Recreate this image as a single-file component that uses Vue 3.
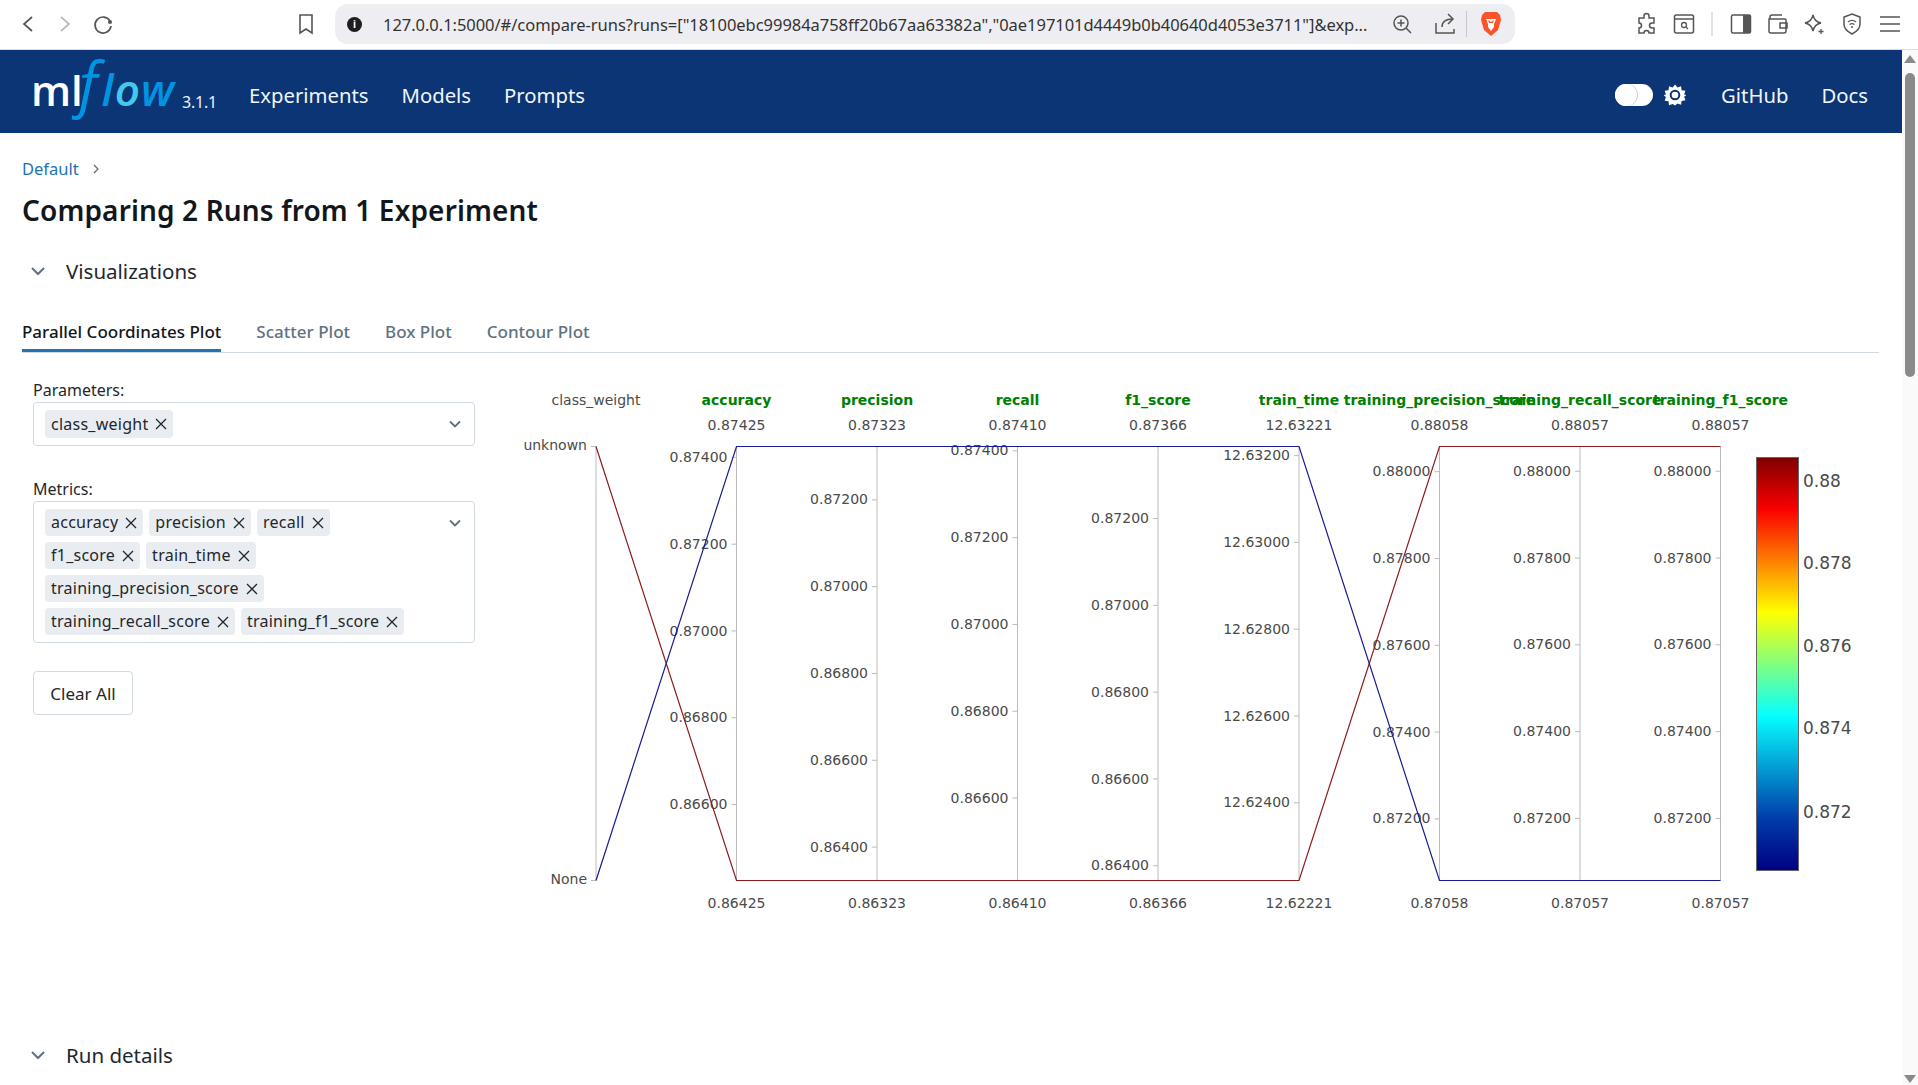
<script setup>
const A = [
  { x: 596, name: 'class_weight', cat: true },
  { x: 736.5, name: 'accuracy', top: 0.87425, bot: '0.86425', ticks: [0.874, 0.872, 0.87, 0.868, 0.866] },
  { x: 877, name: 'precision', top: 0.87323, bot: '0.86323', ticks: [0.872, 0.87, 0.868, 0.866, 0.864] },
  { x: 1017.5, name: 'recall', top: 0.8741, bot: '0.86410', ticks: [0.874, 0.872, 0.87, 0.868, 0.866] },
  { x: 1158, name: 'f1_score', top: 0.87366, bot: '0.86366', ticks: [0.872, 0.87, 0.868, 0.866, 0.864] },
  { x: 1299, name: 'train_time', top: 12.63221, bot: '12.62221', ticks: [12.632, 12.63, 12.628, 12.626, 12.624] },
  { x: 1439.5, name: 'training_precision_score', top: 0.88058, bot: '0.87058', ticks: [0.88, 0.878, 0.876, 0.874, 0.872] },
  { x: 1580, name: 'training_recall_score', top: 0.88057, bot: '0.87057', ticks: [0.88, 0.878, 0.876, 0.874, 0.872] },
  { x: 1720.5, name: 'training_f1_score', top: 0.88057, bot: '0.87057', ticks: [0.88, 0.878, 0.876, 0.874, 0.872] }
]
const T = 446.5
const B = 880.5
const axes = A.map(a => ({
  ...a,
  topLabel: a.cat ? '' : a.top.toFixed(5),
  tickList: a.cat
    ? [{ y: T, label: 'unknown', d: 3.6 }, { y: B, label: 'None', d: 3.6 }]
    : a.ticks.map(v => ({ y: T + (a.top - v) * 43400, label: v.toFixed(5), d: 4.6 }))
}))
const redPts = `596,${T} 736.5,${B} 1299,${B} 1439.5,${T} 1720.5,${T}`
const bluePts = `596,${B} 736.5,${T} 1299,${T} 1439.5,${B} 1720.5,${B}`
const scale = [
  { y: 481, t: '0.88' }, { y: 563, t: '0.878' }, { y: 646, t: '0.876' }, { y: 728, t: '0.874' }, { y: 812, t: '0.872' }
]
const paramChips = ['class_weight']
const metricChips = ['accuracy', 'precision', 'recall', 'f1_score', 'train_time', 'training_precision_score', 'training_recall_score', 'training_f1_score']
const tabs = ['Scatter Plot', 'Box Plot', 'Contour Plot']
</script>

<template>
  <div class="screen">
    <header class="chrome">
      <svg class="ic" style="margin-left:18px" width="20" height="24" viewBox="0 0 20 24"><path d="M14 5 6 12l8 7" fill="none" stroke="#555" stroke-width="1.7"/></svg>
      <svg class="ic" style="margin-left:17px" width="20" height="24" viewBox="0 0 20 24"><path d="M6 5l8 7-8 7" fill="none" stroke="#bbb" stroke-width="1.7"/></svg>
      <svg class="ic" style="margin-left:17px" width="22" height="24" viewBox="0 0 22 24"><path d="M18 9a8 8 0 1 0 1 5" fill="none" stroke="#555" stroke-width="1.7"/><circle cx="18" cy="10" r="2" fill="#555"/></svg>
      <svg class="ic" style="margin-left:184px" width="16" height="22" viewBox="0 0 16 22"><path d="M2 2h12v18l-6-4-6 4z" fill="none" stroke="#555" stroke-width="1.6"/></svg>
      <div class="urlbar">
        <span class="info">i</span>
        <span class="url">127.0.0.1:5000/#/compare-runs?runs=["18100ebc99984a758ff20b67aa63382a","0ae197101d4449b0b40640d4053e3711"]&amp;exp...</span>
        <svg width="22" height="24" viewBox="0 0 22 24" class="zoomic"><circle cx="10" cy="11" r="7" fill="none" stroke="#555" stroke-width="1.5"/><path d="M15 16l5 5M10 7.500v7M6.500 11h7" stroke="#555" stroke-width="1.5"/></svg>
        <svg width="22" height="24" viewBox="0 0 22 24" class="shareic"><path d="M2 11v10h18v-4M8 15c0-6 4-8 11-8M14 2l5 5-5 5" fill="none" stroke="#555" stroke-width="1.5"/></svg>
        <span class="sep"></span>
        <svg width="22" height="26" viewBox="0 0 22 26" class="lion"><path d="M5 1h12l3 3 1 5-3 10-7 6-7-6L1 9l1-5z" fill="#fb542b"/><path d="M6 8h10l-2 5 0 3-3 4-3-4 0-3z" fill="#fff"/><path d="M8 9l3 2 3-2-1 3h-4z" fill="#fb542b"/></svg>
      </div>
      <div class="tools">
        <svg width="24" height="24" viewBox="0 0 24 24"><path d="M9 4a2.500 2.500 0 0 1 5 0v2h5v5h-2a2.500 2.500 0 0 0 0 5h2v5h-5a2.500 2.500 0 0 0-5 0H4v-5a2.500 2.500 0 0 0 0-5V6h5z" fill="none" stroke="#555" stroke-width="1.5"/></svg>
        <svg width="22" height="24" viewBox="0 0 22 24"><rect x="1.500" y="3" width="19" height="18" rx="2" fill="none" stroke="#555" stroke-width="1.5"/><path d="M2 7h18" stroke="#555" stroke-width="1.500"/><circle cx="11" cy="13" r="2.500" fill="none" stroke="#555" stroke-width="1.300"/><path d="M13 15l2 2" stroke="#555" stroke-width="1.300"/></svg>
        <span class="tsep"></span>
        <svg width="22" height="24" viewBox="0 0 22 24"><rect x="1.500" y="3" width="19" height="18" rx="1.500" fill="none" stroke="#555" stroke-width="1.500"/><rect x="13" y="3" width="8" height="18" fill="#555"/></svg>
        <svg width="22" height="24" viewBox="0 0 22 24"><path d="M4 7V5a2 2 0 0 1 2-2h10M3 7h16a1 1 0 0 1 1 1v11a2 2 0 0 1-2 2H5a2 2 0 0 1-2-2zM14 11h7v5h-7z" fill="none" stroke="#555" stroke-width="1.500"/></svg>
        <svg width="24" height="24" viewBox="0 0 24 24"><path d="M11 3c1 5 3 7 8 8-5 1-7 3-8 8-1-5-3-7-8-8 5-1 7-3 8-8z" fill="none" stroke="#555" stroke-width="1.500"/><path d="M19 17v5M16.500 19.500h5" stroke="#555" stroke-width="1.300"/></svg>
        <svg class="shield" width="20" height="24" viewBox="0 0 20 24"><path d="M10 2l8 3v7c0 5-4 8-8 10-4-2-8-5-8-10V5z" fill="none" stroke="#555" stroke-width="1.500"/><path d="M6 10c2.500-2 5.500-2 8 0M7.500 12.500c1.500-1 3.500-1 5 0" fill="none" stroke="#555" stroke-width="1.300"/><circle cx="10" cy="15" r="1" fill="#555"/></svg>
        <svg class="menu" width="22" height="24" viewBox="0 0 22 24"><path d="M1 5h20M1 12h20M1 19h20" stroke="#555" stroke-width="1.600"/></svg>
      </div>
    </header>

    <div class="page">
      <main class="main">
        <nav class="topnav">
          <div class="logo"><span class="ml">ml</span><span class="flow"><span class="bigf">f</span>l<span class="o">o</span>w</span></div>
          <span class="ver">3.1.1</span>
          <a class="navlink first">Experiments</a>
          <a class="navlink">Models</a>
          <a class="navlink">Prompts</a>
          <span class="spacer"></span>
          <span class="toggle"><span class="knob"></span></span>
          <svg class="gear" width="22" height="22" viewBox="0 0 22 22"><path d="M11 0l2.500 3.200 3.800-1.300.5 4 4 .6-1.300 3.800L23 11l-2.500 1.700 1.300 3.800-4 .6-.5 4-3.800-1.300L11 22l-2.500-1.800-3.800 1.300-.5-4-4-.6 1.300-3.800L-1 11l2.500-.7L.2 6.500l4-.6.5-4 3.800 1.300z" fill="#fff" transform="translate(0.500 0.500) scale(.96)"/><circle cx="11" cy="11" r="4.300" fill="none" stroke="#0b3574" stroke-width="2"/></svg>
          <a class="navlink gh">GitHub</a>
          <a class="navlink docs">Docs</a>
        </nav>

        <div class="content">
          <div class="crumb"><a>Default</a><svg width="8" height="10" viewBox="0 0 8 10"><path d="M2 1l4 4-4 4" fill="none" stroke="#5f6f80" stroke-width="1.300"/></svg></div>
          <h1>Comparing 2 Runs from 1 Experiment</h1>
          <div class="section first-sec">
            <svg width="14" height="10" viewBox="0 0 14 10"><path d="M1 2l6 6 6-6" fill="none" stroke="#5f6f80" stroke-width="2"/></svg>
            <span>Visualizations</span>
          </div>

          <div class="tabbar">
            <span class="tab active">Parallel Coordinates Plot</span>
            <span v-for="t in tabs" :key="t" class="tab">{{ t }}</span>
          </div>

          <div class="vizrow">
            <aside class="side">
              <div class="lbl">Parameters:</div>
              <div class="select single">
                <div class="chips">
                  <span v-for="c in paramChips" :key="c" class="chip">{{ c }}<svg width="12" height="12" viewBox="0 0 12 12"><path d="M1 1l10 10M11 1L1 11" stroke="#1f272d" stroke-width="1.300"/></svg></span>
                </div>
                <svg class="chev" width="12" height="8" viewBox="0 0 12 8"><path d="M1 1.500l5 5 5-5" fill="none" stroke="#5f6f80" stroke-width="1.800"/></svg>
              </div>
              <div class="lbl metrics">Metrics:</div>
              <div class="select">
                <div class="chips">
                  <span v-for="c in metricChips" :key="c" class="chip">{{ c }}<svg width="12" height="12" viewBox="0 0 12 12"><path d="M1 1l10 10M11 1L1 11" stroke="#1f272d" stroke-width="1.300"/></svg></span>
                </div>
                <svg class="chev" width="12" height="8" viewBox="0 0 12 8"><path d="M1 1.500l5 5 5-5" fill="none" stroke="#5f6f80" stroke-width="1.800"/></svg>
              </div>
              <button class="clear">Clear All</button>
            </aside>

            <svg class="plot" width="1379" height="620" viewBox="500 370 1379 620">
              <defs>
                <linearGradient id="jet" x1="0" y1="1" x2="0" y2="0">
                  <stop offset="0" stop-color="rgb(0,0,131)"/>
                  <stop offset="0.125" stop-color="rgb(0,60,170)"/>
                  <stop offset="0.375" stop-color="rgb(5,255,255)"/>
                  <stop offset="0.625" stop-color="rgb(255,255,0)"/>
                  <stop offset="0.875" stop-color="rgb(250,0,0)"/>
                  <stop offset="1" stop-color="rgb(128,0,0)"/>
                </linearGradient>
              </defs>
              <g v-for="a in axes" :key="a.name">
                <line :x1="a.x" :x2="a.x" :y1="T" :y2="B" class="axis"/>
                <g v-for="t in a.tickList" :key="t.label">
                  <line :x1="a.x - 5" :x2="a.x" :y1="t.y" :y2="t.y" class="axis"/>
                  <text :x="a.x - 9" :y="t.y + t.d" text-anchor="end" class="tx">{{ t.label }}</text>
                </g>
                <text :x="a.x" y="405" text-anchor="middle" :class="a.cat ? 'tx' : 'title'">{{ a.name }}</text>
                <text v-if="!a.cat" :x="a.x" y="430" text-anchor="middle" class="tx">{{ a.topLabel }}</text>
                <text v-if="!a.cat" :x="a.x" y="908" text-anchor="middle" class="tx">{{ a.bot }}</text>
              </g>
              <polyline :points="redPts" class="red"/>
              <polyline :points="bluePts" class="blue"/>
              <rect x="1756.500" y="457.500" width="42" height="413" fill="url(#jet)" stroke="#666" stroke-width="1"/>
              <text v-for="s in scale" :key="s.t" x="1803" :y="s.y + 6" class="sc">{{ s.t }}</text>
            </svg>
          </div>

          <div class="section">
            <svg width="14" height="10" viewBox="0 0 14 10"><path d="M1 2l6 6 6-6" fill="none" stroke="#5f6f80" stroke-width="2"/></svg>
            <span>Run details</span>
          </div>
        </div>
      </main>
      <div class="scroll">
        <span class="up"></span>
        <span class="thumb"></span>
        <span class="grow"></span>
        <span class="down"></span>
      </div>
    </div>
  </div>
</template>

<style scoped>
.screen { width: 1918px; height: 1085px; overflow: hidden; background: #fff; font-family: "Noto Sans", "Open Sans", sans-serif; color: #11171c; display: flex; flex-direction: column; }
.chrome { height: 50px; flex: none; display: flex; align-items: center; border-bottom: 1px solid #dcdce0; box-sizing: border-box; padding-bottom: 1px; }
.ic { flex: none; }
.urlbar { margin-left: 21px; width: 1180px; height: 40px; border-radius: 13px; background: #eeedf2; display: flex; align-items: center; flex: none; box-sizing: border-box; padding-left: 12px; }
.info { width: 15px; height: 15px; border-radius: 50%; background: #1e1e22; color: #fff; font-size: 10px; font-weight: 700; line-height: 15px; text-align: center; flex: none; }
.url { margin-left: 21px; width: 987px; flex: none; font-size: 16.500px; letter-spacing: -0.04px; white-space: nowrap; overflow: hidden; color: #333; }
.zoomic { margin-left: 21px; flex: none; }
.shareic { margin-left: 21px; flex: none; }
.sep { width: 1px; height: 26px; background: #c8c8cc; margin-left: 10px; flex: none; }
.lion { margin-left: 13px; flex: none; }
.tools { margin-left: 120px; display: flex; align-items: center; gap: 14px; }
.tools svg { flex: none; }
.tsep { width: 2px; height: 24px; background: #e2e2e6; margin: 0 3px 0 2px; }
.tools .shield { margin-left: 2px; }
.tools .menu { margin-left: 3px; }
.page { flex: 1; display: flex; min-height: 0; }
.main { width: 1902px; flex: none; }
.topnav { height: 83px; background: #0b3574; display: flex; align-items: center; color: #fff; box-sizing: border-box; position: relative; }
.logo { margin-left: 31px; display: flex; align-items: baseline; font-family: "Open Sans", sans-serif; line-height: 1; width: 151px; transform: translateY(-9px); white-space: nowrap; }
.ml { font-size: 42px; font-weight: 600; color: #fff; }
.flow { font-size: 44px; font-style: italic; color: #0194e2; font-weight: 600; letter-spacing: 1px; }
.bigf { font-size: 60px; font-weight: 500; margin-left: -4px; margin-right: 3px; }
.o { color: #43c9ed; }
.ver { font-size: 16px; margin-top: 21px; width: 67px; color: #eef3f8; letter-spacing: -0.2px; }
.navlink { font-size: 20.300px; color: #f1f5f9; margin-right: 33px; margin-top: 6px; }
.spacer { flex: 1; }
.toggle { width: 38px; height: 22px; background: #fff; border-radius: 11px; position: relative; flex: none; margin-top: 6px; }
.knob { position: absolute; left: 0; top: 0; width: 22px; height: 22px; border-radius: 50%; background: #fff; box-shadow: 1px 0 0 #c8d2dc; }
.gear { margin-left: 11px; margin-top: 6px; flex: none; }
.gh { margin-left: 35px; }
.docs { margin-right: 34px; }
.content { padding: 24px 23px 0 22px; }
.crumb { display: flex; align-items: center; gap: 13px; line-height: 24px; font-size: 16.500px; color: #2272b4; height: 24px; }
h1 { font-size: 28px; font-weight: 600; line-height: 40px; margin: 9px 0 0; letter-spacing: 0.14px; color: #11171c; }
.section { display: flex; align-items: center; height: 28px; font-size: 20.500px; color: #1f272d; }
.section svg { margin-left: 9px; margin-right: 21px; flex: none; }
.first-sec { margin-top: 27px; }
.tabbar { margin-top: 34px; display: flex; gap: 35px; border-bottom: 1px solid #d1d9e1; height: 34px; box-sizing: border-box; }
.tab { font-size: 17px; line-height: 24px; color: #5f7281; font-weight: 500; height: 33px; box-sizing: border-box; padding-top: 1px; }
.active { color: #11171c; border-bottom: 3px solid #2272b4; }
.vizrow { display: flex; height: 688px; }
.side { width: 453px; box-sizing: border-box; padding: 25px 0 0 11px; flex: none; }
.lbl { font-size: 16px; line-height: 24px; color: #1f272d; }
.metrics { margin-top: 31px; }
.select { width: 442px; box-sizing: border-box; border: 1px solid #d1d9e1; border-radius: 4px; padding: 7px 0 7px 11px; display: flex; align-items: flex-start; justify-content: space-between; }
.chips { width: 378px; display: flex; flex-wrap: wrap; gap: 6px 6px; }
.chip { height: 27px; line-height: 27px; background: #e9edf1; border-radius: 4px; padding: 0 6px; font-size: 16px; letter-spacing: 0.25px; color: #1f272d; display: inline-flex; align-items: center; gap: 7px; white-space: nowrap; }
.single .chip { height: 28px; line-height: 28px; }
.chip svg { flex: none; }
.chev { margin: 10px 13px 0 0; flex: none; }
.clear { display: block; margin-top: 28px; width: 100px; height: 44px; background: #fff; border: 1px solid #d1d9e1; border-radius: 4px; font: inherit; font-size: 17px; color: #1f272d; padding: 0; }
.plot { margin: 17px 0 0 25px; flex: none; overflow: visible; }
.axis { stroke: #bbb; stroke-width: 1; }
.tx { font-family: "DejaVu Sans", sans-serif; font-size: 14px; fill: #4a4a4a; }
.title { font-family: "DejaVu Sans", sans-serif; font-size: 14px; font-weight: 700; fill: #008000; }
.sc { font-family: "DejaVu Sans", sans-serif; font-size: 17px; fill: #4a4a4a; }
.red, .blue { fill: none; stroke-width: 1.200; }
.red { stroke: #8e1a1a; }
.blue { stroke: #1a1a92; }
.scroll { flex: 1; background: #fafafa; display: flex; flex-direction: column; align-items: center; padding: 5px 0 2px; box-sizing: border-box; }
.up { width: 0; height: 0; border: 6px solid transparent; border-top: 0; border-bottom: 8px solid #8a8a8a; }
.thumb { width: 10px; height: 304px; margin-top: 10px; background: #8a8a8a; border-radius: 5px; }
.grow { flex: 1; }
.down { width: 0; height: 0; border: 6px solid transparent; border-bottom: 0; border-top: 8px solid #8a8a8a; }
</style>

<style>
html, body { margin: 0; overflow: hidden; background: #fff; }
</style>
